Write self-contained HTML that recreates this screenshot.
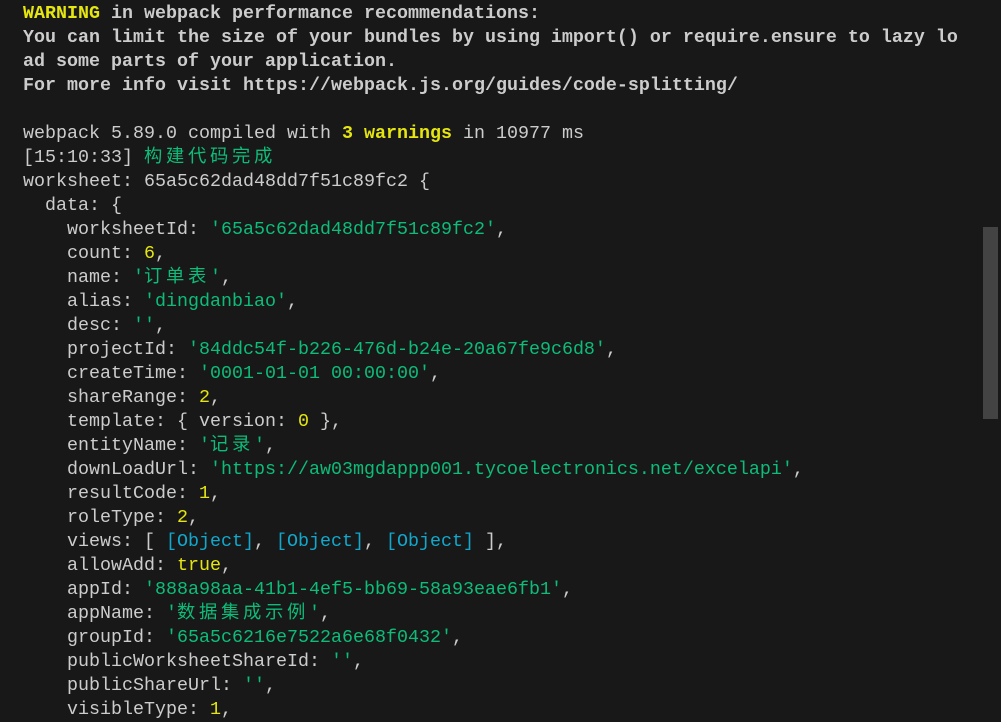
<!DOCTYPE html>
<html><head><meta charset="utf-8"><style>
html,body{margin:0;padding:0;background:#181818;width:1001px;height:722px;overflow:hidden}
.t{margin:0;padding:2px 0 0 23px;font-family:"Liberation Mono",monospace;font-size:18.33px;color:#cccccc}
.t div{height:24px;line-height:24px;overflow:visible;white-space:pre}
.b{font-weight:bold}
.y{color:#e5e510}
.g{color:#0dbc79}
.c{color:#11a8cd}
.k{letter-spacing:3.67px;font-family:"Noto Sans CJK SC",sans-serif;line-height:1}
.sb{position:absolute;left:983px;top:227px;width:15px;height:192px;background:#434343}
</style></head><body>
<div class="t"><div class="b"><span class="y">WARNING</span> in webpack performance recommendations:</div><div class="b">You can limit the size of your bundles by using import() or require.ensure to lazy lo</div><div class="b">ad some parts of your application.</div><div class="b">For more info visit https://webpack.js.org/guides/code-splitting/</div><div></div><div>webpack 5.89.0 compiled with <span class="y b">3 warnings</span> in 10977 ms</div><div>[15:10:33] <span class="g k">构建代码完成</span></div><div>worksheet: 65a5c62dad48dd7f51c89fc2 {</div><div>  data: {</div><div>    worksheetId: <span class="g">'65a5c62dad48dd7f51c89fc2'</span>,</div><div>    count: <span class="y">6</span>,</div><div>    name: <span class="g">'<span class="k">订单表</span>'</span>,</div><div>    alias: <span class="g">'dingdanbiao'</span>,</div><div>    desc: <span class="g">''</span>,</div><div>    projectId: <span class="g">'84ddc54f-b226-476d-b24e-20a67fe9c6d8'</span>,</div><div>    createTime: <span class="g">'0001-01-01 00:00:00'</span>,</div><div>    shareRange: <span class="y">2</span>,</div><div>    template: { version: <span class="y">0</span> },</div><div>    entityName: <span class="g">'<span class="k">记录</span>'</span>,</div><div>    downLoadUrl: <span class="g">'https://aw03mgdappp001.tycoelectronics.net/excelapi'</span>,</div><div>    resultCode: <span class="y">1</span>,</div><div>    roleType: <span class="y">2</span>,</div><div>    views: [ <span class="c">[Object]</span>, <span class="c">[Object]</span>, <span class="c">[Object]</span> ],</div><div>    allowAdd: <span class="y">true</span>,</div><div>    appId: <span class="g">'888a98aa-41b1-4ef5-bb69-58a93eae6fb1'</span>,</div><div>    appName: <span class="g">'<span class="k">数据集成示例</span>'</span>,</div><div>    groupId: <span class="g">'65a5c6216e7522a6e68f0432'</span>,</div><div>    publicWorksheetShareId: <span class="g">''</span>,</div><div>    publicShareUrl: <span class="g">''</span>,</div><div>    visibleType: <span class="y">1</span>,</div></div>
<div class="sb"></div>
</body></html>
